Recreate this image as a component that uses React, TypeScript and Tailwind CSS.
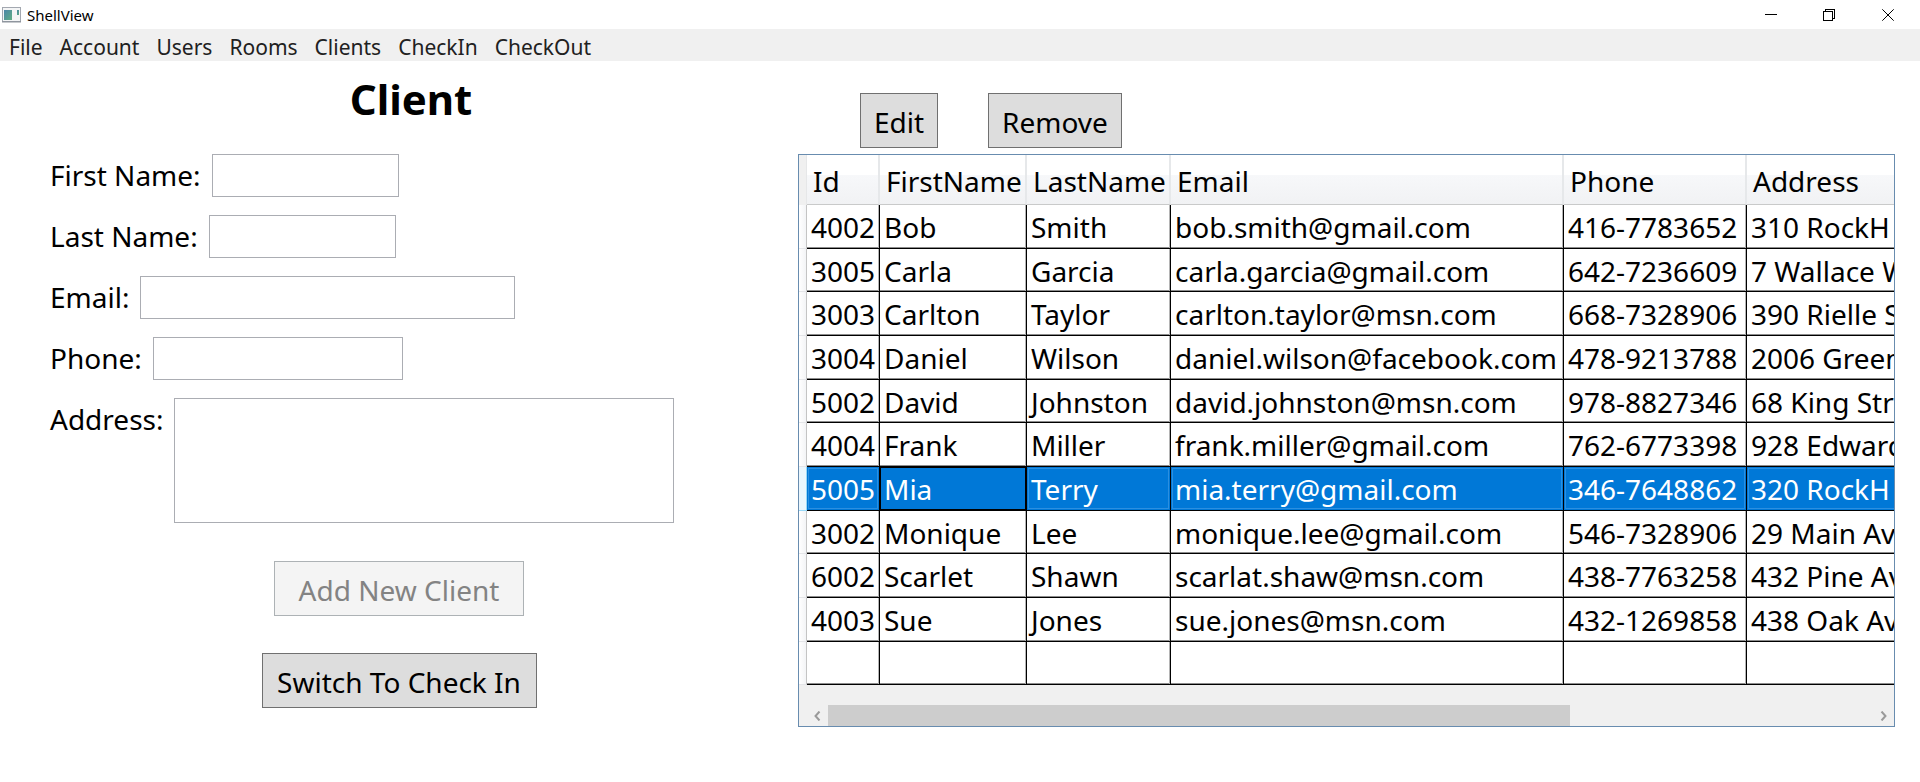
import React from "react";

const menuItems = ["File", "Account", "Users", "Rooms", "Clients", "CheckIn", "CheckOut"];

const columns = ["Id", "FirstName", "LastName", "Email", "Phone", "Address"];

const clients = [
  ["4002", "Bob", "Smith", "bob.smith@gmail.com", "416-7783652", "310 RockH"],
  ["3005", "Carla", "Garcia", "carla.garcia@gmail.com", "642-7236609", "7 Wallace W"],
  ["3003", "Carlton", "Taylor", "carlton.taylor@msn.com", "668-7328906", "390 Rielle S"],
  ["3004", "Daniel", "Wilson", "daniel.wilson@facebook.com", "478-9213788", "2006 Green"],
  ["5002", "David", "Johnston", "david.johnston@msn.com", "978-8827346", "68 King Str"],
  ["4004", "Frank", "Miller", "frank.miller@gmail.com", "762-6773398", "928 Edward"],
  ["5005", "Mia", "Terry", "mia.terry@gmail.com", "346-7648862", "320 RockH"],
  ["3002", "Monique", "Lee", "monique.lee@gmail.com", "546-7328906", "29 Main Av"],
  ["6002", "Scarlet", "Shawn", "scarlat.shaw@msn.com", "438-7763258", "432 Pine Av"],
  ["4003", "Sue", "Jones", "sue.jones@msn.com", "432-1269858", "438 Oak Av"],
  ["", "", "", "", "", ""],
];

const selectedId = "5005";

function TitleBar() {
  return (
    <header className="flex h-[29px] items-center justify-between bg-white">
      <div className="flex items-center gap-1.5 pl-0.5">
        <svg width="19" height="16" viewBox="0 0 19 16" aria-hidden="true">
          <defs>
            <linearGradient id="pane" x1="0" y1="0" x2="1" y2="1">
              <stop offset="0" stopColor="#4c86a8" />
              <stop offset="1" stopColor="#5fae84" />
            </linearGradient>
          </defs>
          <rect x="0.5" y="0.5" width="18" height="14" fill="#f4f5f6" stroke="#a3a8b0" />
          <rect x="0" y="14" width="19" height="1.5" fill="#8f959e" />
          <rect x="2" y="3" width="8" height="10" fill="url(#pane)" />
          <rect x="15" y="3" width="2" height="5" fill="url(#pane)" />
        </svg>
        <span className="text-[15px] leading-5">ShellView</span>
      </div>
      <div className="flex h-full pr-0.5">
        <button aria-label="Minimize" className="flex w-[58px] items-center justify-center">
          <svg width="12" height="12" viewBox="0 0 12 12" shapeRendering="crispEdges">
            <rect x="0" y="5" width="12" height="1" fill="#000" />
          </svg>
        </button>
        <button aria-label="Restore" className="flex w-[58px] items-center justify-center">
          <svg width="12" height="12" viewBox="0 0 12 12" fill="none" stroke="#000" shapeRendering="crispEdges">
            <rect x="0.5" y="2.5" width="9" height="9" />
            <path d="M2.500 2.500V0.500H11.500V9.500H9.500" />
          </svg>
        </button>
        <button aria-label="Close" className="flex w-[60px] items-center justify-center">
          <svg width="12" height="12" viewBox="0 0 12 12" fill="none" stroke="#000">
            <path d="M0.300 0.300L11.700 11.700M11.700 0.300L0.300 11.700" />
          </svg>
        </button>
      </div>
    </header>
  );
}

function Field({ id, label, width }: { id: string; label: string; width: string }) {
  return (
    <div className="flex items-center gap-[11px]">
      <label htmlFor={id} className="leading-[43px]">
        {label}
      </label>
      <input id={id} type="text" className={`h-[43px] border border-[#abadb3] bg-white px-1 ${width}`} />
    </div>
  );
}

function ClientForm() {
  return (
    <section className="flex flex-col">
      <h1 className="mr-[-24px] pt-2 text-center text-[42px] leading-[60px] font-bold">Client</h1>
      <form className="flex flex-col gap-[18px] pt-[25px] pl-[50px]">
        <Field id="first-name" label="First Name:" width="w-[187px]" />
        <Field id="last-name" label="Last Name:" width="w-[187px]" />
        <Field id="email" label="Email:" width="w-[375px]" />
        <Field id="phone" label="Phone:" width="w-[250px]" />
        <div className="flex items-start gap-[11px]">
          <label htmlFor="address" className="leading-[43px]">
            Address:
          </label>
          <textarea id="address" className="h-[125px] w-[500px] resize-none border border-[#abadb3] bg-white px-1" />
        </div>
      </form>
      <div className="flex flex-col items-center gap-[37px] pt-[38px]">
        <button disabled className="h-[55px] w-[250px] border border-[#adb2b5] bg-[#f4f4f4] pt-0.5 text-[#838383]">
          Add New Client
        </button>
        <button className="h-[55px] w-[275px] border border-[#707070] bg-[#dddddd] pt-0.5">Switch To Check In</button>
      </div>
    </section>
  );
}

function cellStyle(selected: boolean, focused: boolean) {
  if (focused) return "border-black bg-[#0078d7] text-white shadow-[inset_0_0_0_1px_#000]";
  if (selected) return "border-black bg-[#0078d7] text-white shadow-[inset_0_0_0_1px_#0078d7,inset_0_0_0_2px_#2b8fe0]";
  return "border-black bg-white shadow-[inset_-1px_0_0_#b4b4b4,inset_0_-1px_0_#8c8c8c]";
}

function ClientGrid() {
  return (
    <div className="border border-[#688caf] bg-[#f0f0f0]">
      <div className="overflow-hidden">
        <table className="w-[1536px] table-fixed border-separate border-spacing-0">
          <colgroup>
            <col className="w-[8px]" />
            <col className="w-[73px]" />
            <col className="w-[147px]" />
            <col className="w-[144px]" />
            <col className="w-[393px]" />
            <col className="w-[183px]" />
            <col />
          </colgroup>
          <thead>
            <tr className="h-[50px]">
              <td className="border-r border-[#e6e7e8] bg-[#f0f0f0] p-0" />
              {columns.map((name) => (
                <th
                  key={name}
                  scope="col"
                  className="border-r-2 border-b border-r-[#e6e8ea] border-b-[#c9caca] bg-linear-to-b from-white from-40% via-[#f7f8fa] via-40% to-[#f1f2f4] p-0 pt-0.5 pl-1.5 text-left font-normal whitespace-nowrap"
                >
                  {name}
                </th>
              ))}
            </tr>
          </thead>
          <tbody>
            {clients.map((row, r) => {
              const selected = row[0] === selectedId;
              return (
                <tr key={r} className="h-[44px] nth-[3n+2]:h-[43px]">
                  <td
                    className={
                      selected
                        ? "border-r border-b border-[#98d8f8] bg-[#eaf6fd] p-0"
                        : "border-r border-b border-r-[#c4c4c4] border-b-[#e4e5e8] bg-linear-to-r from-white to-[#f3f4f6] p-0"
                    }
                  />
                  {row.map((value, c) => (
                    <td
                      key={c}
                      className={`overflow-hidden border-r border-b p-0 pt-px pl-1 leading-[38px] whitespace-nowrap ${cellStyle(selected, selected && c === 1)}`}
                    >
                      {value}
                    </td>
                  ))}
                </tr>
              );
            })}
          </tbody>
        </table>
      </div>
      <div className="mt-5 flex h-[21px] pl-2">
        <button aria-label="Scroll left" className="flex w-[21px] items-center justify-center">
          <svg width="7" height="10" viewBox="0 0 7 10" fill="none" stroke="#9a9a9a" strokeWidth="2">
            <path d="M5.500 0.500L1.500 5L5.500 9.500" />
          </svg>
        </button>
        <div className="flex-1">
          <div className="h-full w-[71%] bg-[#cdcdcd]" />
        </div>
        <button aria-label="Scroll right" className="flex w-[21px] items-center justify-center">
          <svg width="7" height="10" viewBox="0 0 7 10" fill="none" stroke="#9a9a9a" strokeWidth="2">
            <path d="M1.500 0.500L5.500 5L1.500 9.500" />
          </svg>
        </button>
      </div>
    </div>
  );
}

export default function App() {
  return (
    <div className="min-h-screen bg-white font-['Noto_Sans',sans-serif] text-black">
      <TitleBar />
      <nav className="flex h-8 items-center gap-[17px] bg-[#f0f0f0] pt-1 pl-[9px] text-[21px] leading-7 text-[#212121]">
        {menuItems.map((item) => (
          <a key={item} href="#">
            {item}
          </a>
        ))}
      </nav>
      <main className="grid grid-cols-[798fr_1122fr] text-[28px]">
        <ClientForm />
        <section className="min-w-0 pt-8 pr-[25px]">
          <div className="mb-1.5 flex gap-[50px] pl-[62px]">
            <button className="h-[55px] w-[78px] border border-[#707070] bg-[#dddddd] pt-0.5">Edit</button>
            <button className="h-[55px] w-[134px] border border-[#707070] bg-[#dddddd] pt-0.5">Remove</button>
          </div>
          <ClientGrid />
        </section>
      </main>
    </div>
  );
}
